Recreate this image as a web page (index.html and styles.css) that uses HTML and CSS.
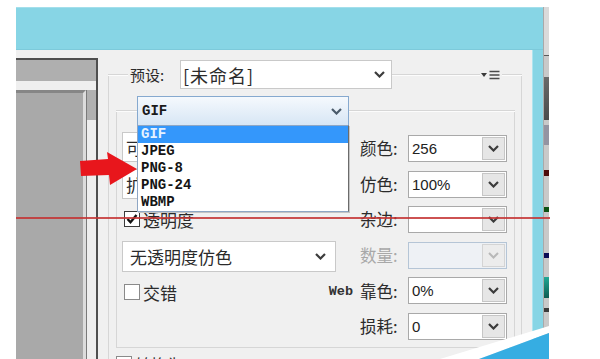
FILE: index.html
```html
<!DOCTYPE html>
<html lang="zh-CN">
<head>
<meta charset="utf-8">
<title>存储为Web所用格式</title>
<link rel="stylesheet" href="styles.css">
</head>
<body>
<div class="shot">
  <div class="win">
    <div class="titlebar"></div>
    <div class="client">
      <div class="preview">
        <div class="pv-frame">
          <div class="pv-top"></div>
          <div class="pv-sep"></div>
          <div class="pv-main">
            <div class="pv-img"></div>
            <div class="pv-gut"><div class="pv-gut-top"></div></div>
          </div>
        </div>
      </div>
      <div class="settings">
        <div class="og-head">
          <span class="ln ln-l"></span>
          <span class="lbl-preset">预设:</span>
          <div class="dd dd-preset">
            <span class="preset-val">[未命名]</span>
            <svg class="chev" width="11" height="7" viewBox="0 0 11 7"><path d="M1 1l4.5 4.5L10 1" fill="none" stroke="#3c3c3c" stroke-width="2.2"/></svg>
          </div>
          <span class="ln ln-fill"></span>
          <span class="menu-icon">
            <svg width="20" height="10" viewBox="0 0 20 10"><path d="M0 3h6l-3 4z" fill="#3a3a3a"/><path d="M8.5 1.5h10M8.5 5h10M8.5 8.5h10" stroke="#4a4a4a" stroke-width="1.3"/></svg>
          </span>
          <span class="ln ln-r"></span>
        </div>
        <div class="og-body">
          <div class="ig-head">
            <span class="ln ln-il"></span>
            <div class="dd dd-format">
              <span class="fmt-val">GIF</span>
              <svg class="chev" width="11" height="7" viewBox="0 0 11 7"><path d="M1 1l4.5 4.5L10 1" fill="none" stroke="#4a5a6a" stroke-width="2.2"/></svg>
              <ul class="fmt-list">
                <li class="sel">GIF</li>
                <li>JPEG</li>
                <li>PNG-8</li>
                <li>PNG-24</li>
                <li>WBMP</li>
              </ul>
            </div>
            <span class="ln ln-fill"></span>
          </div>
          <div class="ig-body">
            <div class="col-l">
              <div class="dd dd-l dd-sel"><span>可选择</span></div>
              <div class="dd dd-l dd-diff"><span>扩散</span></div>
              <div class="cbrow cb-trans">
                <span class="cb cb-on"><svg width="14" height="14" viewBox="0 0 14 14"><path d="M2.5 7l3 3.2L11.5 3" fill="none" stroke="#111" stroke-width="2.4"/></svg></span>
                <span>透明度</span>
              </div>
              <div class="dd dd-l dd-dither">
                <span>无透明度仿色</span>
                <svg class="chev" width="11" height="7" viewBox="0 0 11 7"><path d="M1 1l4.5 4.5L10 1" fill="none" stroke="#3c3c3c" stroke-width="2.2"/></svg>
              </div>
              <div class="cbrow cb-inter">
                <span class="cb"></span>
                <span>交错</span>
              </div>
            </div>
            <div class="col-r">
              <div class="row">
                <span class="lbl">颜色:</span>
                <div class="inp"><span class="val">256</span><span class="btn"><svg width="11" height="7" viewBox="0 0 11 7"><path d="M1 1l4.5 4.5L10 1" fill="none" stroke="#3c3c3c" stroke-width="2.2"/></svg></span></div>
              </div>
              <div class="row">
                <span class="lbl">仿色:</span>
                <div class="inp"><span class="val">100%</span><span class="btn"><svg width="11" height="7" viewBox="0 0 11 7"><path d="M1 1l4.5 4.5L10 1" fill="none" stroke="#3c3c3c" stroke-width="2.2"/></svg></span></div>
              </div>
              <div class="row">
                <span class="lbl">杂边:</span>
                <div class="inp"><span class="val"></span><span class="btn"><svg width="11" height="7" viewBox="0 0 11 7"><path d="M1 1l4.5 4.5L10 1" fill="none" stroke="#3c3c3c" stroke-width="2.2"/></svg></span></div>
              </div>
              <div class="row row-off">
                <span class="lbl">数量:</span>
                <div class="inp inp-off"><span class="val"></span><span class="btn"><svg width="11" height="7" viewBox="0 0 11 7"><path d="M1 1l4.5 4.5L10 1" fill="none" stroke="#b8b8b8" stroke-width="2"/></svg></span></div>
              </div>
              <div class="row">
                <span class="web">Web</span>
                <span class="lbl">靠色:</span>
                <div class="inp"><span class="val">0%</span><span class="btn"><svg width="11" height="7" viewBox="0 0 11 7"><path d="M1 1l4.5 4.5L10 1" fill="none" stroke="#3c3c3c" stroke-width="2.2"/></svg></span></div>
              </div>
              <div class="row">
                <span class="lbl">损耗:</span>
                <div class="inp"><span class="val">0</span><span class="btn"><svg width="11" height="7" viewBox="0 0 11 7"><path d="M1 1l4.5 4.5L10 1" fill="none" stroke="#3c3c3c" stroke-width="2.2"/></svg></span></div>
              </div>
            </div>
          </div>
          <div class="below">
            <span class="cb"></span>
            <span>转换为 sRGB</span>
          </div>
        </div>
      </div>
    </div>
  </div>
  <div class="strip">
    <div class="sw sw-top"></div>
    <div class="sw sw-dark"></div>
    <div class="sw sw-tab"></div>
    <div class="sw sw-red"></div>
    <div class="sw sw-green"></div>
    <div class="sw sw-navy"></div>
    <div class="sw sw-teal"></div>
    <div class="sw sw-gray"></div>
  </div>

  <svg class="arrow" width="58" height="34" viewBox="0 0 58 34"><polygon points="0,9 28,7 27,0 57,17 30,33 29,23 1,24" fill="#e8161c"/></svg>
  <div class="redline"></div>
  <svg class="curl" width="130" height="39" viewBox="0 0 130 39"><polygon points="20,39 129,6 129,13 59,39" fill="#ffffff"/><polygon points="59,39 129,13 129,39" fill="#36ade2"/></svg>
</div>
</body>
</html>
```
FILE: styles.css
```css
* { box-sizing: border-box; }
html, body { margin: 0; padding: 0; }
body {
  width: 600px;
  height: 359px;
  overflow: hidden;
  background: #ffffff;
  font-family: "Noto Sans CJK SC", "Noto Sans", sans-serif;
  color: #2b2b2b;
}

.shot {
  position: relative;
  display: flex;
  width: 534px;
  height: 352px;
  margin: 7px 0 0 16px;
}

.win {
  flex: 0 0 527px;
  display: flex;
  flex-direction: column;
  background: #87d5e5;
}
.titlebar {
  height: 43px;
  border-top: 1px solid #a4dfeb;
  border-bottom: 1px solid #7dcadb;
}
.client {
  flex: 1;
  display: flex;
  margin-right: 11px;
  background: #f0f0f0;
  box-shadow: 1px 0 0 #aee4ef;
  overflow: hidden;
}

/* preview */
.preview {
  flex: 0 0 82px;
  display: flex;
  flex-direction: column;
  padding-top: 8px;
}
.pv-frame {
  flex: 1;
  display: flex;
  flex-direction: column;
  border-top: 2px solid #4f4f4f;
  border-right: 2px solid #4f4f4f;
  background: #afafaf;
}
.pv-top { height: 21px; }
.pv-sep { height: 9px; background: #efefef; }
.pv-main { flex: 1; display: flex; }
.pv-img {
  width: 70px;
  background: #a9a9a9;
  border-top: 3px solid #868686;
  border-right: 3px solid #dcdcdc;
}
.pv-gut {
  flex: 1;
  display: flex;
  flex-direction: column;
  border-left: 1px solid #7a7a7a;
  background: #eeeeee;
}
.pv-gut-top { height: 30px; background: #b0b0b0; }

/* settings */
.settings {
  flex: 1;
  display: flex;
  flex-direction: column;
  margin-left: 10px;
  padding: 10px 10px 0 0;
}
.og-head {
  position: relative;
  z-index: 1;
  display: flex;
  align-items: center;
  height: 29px;
}
.ln {
  height: 2px;
  border-top: 1px solid #d6d6d6;
  border-bottom: 1px solid #fcfcfc;
}
.ln-l { width: 20px; }
.ln-r { width: 20px; }
.ln-il { width: 21px; }
.ln-fill { flex: 1; }
.lbl-preset {
  width: 52px;
  padding-left: 2px;
  font-size: 15px;
  line-height: 1;
}
.menu-icon {
  width: 22px;
  display: flex;
  justify-content: center;
}

.dd {
  display: flex;
  align-items: center;
  justify-content: space-between;
  background: #ffffff;
  border: 1px solid #c9c9c9;
  white-space: nowrap;
}
.dd-preset {
  width: 212px;
  height: 29px;
  padding: 0 6px 0 2px;
}
.preset-val {
  font-size: 18px;
  letter-spacing: 1px;
  line-height: 1;
}

.og-body {
  flex: 1;
  margin-top: -15px;
  border-left: 1px solid #d6d6d6;
  border-right: 1px solid #d6d6d6;
  padding: 22px 6px 0 7px;
}
.ig-head {
  position: relative;
  z-index: 3;
  display: flex;
  align-items: center;
  height: 30px;
}
.dd-format {
  position: relative;
  width: 212px;
  height: 30px;
  padding: 0 6px 0 4px;
  border-color: #86a9cf;
  background: linear-gradient(#f5f9fd, #d7e6f5);
}
.fmt-val {
  font-family: "Liberation Mono", monospace;
  font-weight: bold;
  font-size: 14px;
  color: #1a1a1a;
}
.fmt-list {
  position: absolute;
  left: -1px;
  top: 28px;
  width: 212px;
  height: 87px;
  margin: 0;
  padding: 0;
  list-style: none;
  background: #ffffff;
  border: 1px solid #8ea6c4;
  border-right-color: #6b6b6b;
  box-shadow: 1px 1px 0 #c4c4c4;
  z-index: 5;
}
.fmt-list li {
  height: 17px;
  padding-left: 3px;
  font-family: "Liberation Mono", monospace;
  font-weight: bold;
  font-size: 14px;
  line-height: 17px;
  color: #151515;
}
.fmt-list li.sel {
  background: #3497fb;
  color: #e6f2ff;
}

.ig-body {
  display: flex;
  justify-content: space-between;
  height: 237px;
  margin-top: -15px;
  padding: 21px 7px 0 5px;
  border: 1px solid #d6d6d6;
  border-top: 0;
}

.col-l {
  width: 214px;
  display: flex;
  flex-direction: column;
  font-size: 17px;
}
.dd-l { height: 30px; padding: 0 9px 0 3px; line-height: 1; }
.dd-sel { margin-bottom: 7px; }
.dd-diff { margin-bottom: 11px; }
.dd-dither { height: 31px; padding-left: 7px; margin-bottom: 11px; }
.cbrow {
  display: flex;
  align-items: center;
  gap: 3px;
  height: 18px;
  padding-left: 2px;
  line-height: 1;
}
.cb-trans { margin-bottom: 13px; }
.cb {
  width: 16px;
  height: 16px;
  flex: 0 0 16px;
  display: flex;
  align-items: center;
  justify-content: center;
  background: #ffffff;
  border: 1px solid #8a8a8a;
}
.cb-on { border-color: #3a3a3a; }

.col-r {
  width: 147px;
  margin-top: 3px;
  display: flex;
  flex-direction: column;
  gap: 8.6px;
}
.row {
  display: flex;
  align-items: center;
  justify-content: flex-end;
  height: 27px;
  white-space: nowrap;
}
.row > * { flex-shrink: 0; }
.lbl {
  width: 40px;
  margin-right: 8px;
  font-size: 16.5px;
  line-height: 1;
}
.web {
  margin-right: 7px;
  padding-top: 2px;
  font-family: "Liberation Mono", monospace;
  font-weight: bold;
  font-size: 13.5px;
  color: #333;
}
.row-off .lbl { color: #a8a8a8; }
.inp {
  display: flex;
  width: 99px;
  height: 27px;
  background: #ffffff;
  border: 1px solid #a9a9a9;
}
.inp .val {
  flex: 1;
  display: flex;
  align-items: center;
  padding-left: 3px;
  font-family: "Liberation Sans", sans-serif;
  font-size: 15px;
  color: #222;
}
.inp .btn {
  width: 23px;
  margin: 1px;
  display: flex;
  align-items: center;
  justify-content: center;
  background: #e6e6e6;
  border: 1px solid #c6c6c6;
}
.inp-off {
  background: #eef1f5;
  border-color: #b5c5d6;
}
.inp-off .btn {
  background: #ececec;
  border-color: #d4d4d4;
}

.below {
  display: flex;
  align-items: center;
  gap: 3px;
  margin-top: 8px;
  font-size: 16px;
  line-height: 1;
}

/* right-hand strip of the underlying app */
.strip {
  flex: 0 0 6px;
  display: flex;
  flex-direction: column;
  background: #c9c9c9;
  border-left: 1px solid #a9a9a9;
}
.sw-top { height: 49px; background: #dadada; border-bottom: 1px solid #5a5a5a; }
.sw-dark { height: 43px; margin-top: 21px; background: linear-gradient(#6a6a6a, #4a4a4a); }
.sw-tab { height: 20px; margin-top: 5px; background: #9494a2; }
.sw-red { height: 6px; margin-top: 25px; background: #4d0a0a; }
.sw-green { height: 5px; margin-top: 31px; background: #0d5212; }
.sw-navy { height: 5px; margin-top: 41px; background: #0b0b55; }
.sw-teal { height: 21px; margin-top: 19px; background: linear-gradient(#22a894, #0d5c52); }
.sw-gray { height: 4px; margin-top: 10px; background: #3a3a3a; }

/* overlays */
.arrow {
  position: absolute;
  left: 64px;
  top: 145px;
  z-index: 8;
}
.redline {
  position: absolute;
  left: 0;
  top: 210px;
  width: 534px;
  height: 2px;
  background: rgba(196, 52, 52, 0.85);
  z-index: 10;
}
.curl {
  position: absolute;
  left: 404px;
  top: 313px;
  z-index: 9;
}
```
